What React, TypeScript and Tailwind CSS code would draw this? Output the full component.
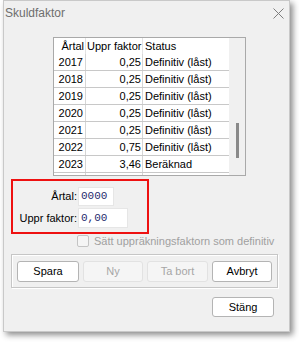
import React from 'react';

const ROWS = [
  { year: '2017', factor: '0,25', status: 'Definitiv (låst)' },
  { year: '2018', factor: '0,25', status: 'Definitiv (låst)' },
  { year: '2019', factor: '0,25', status: 'Definitiv (låst)' },
  { year: '2020', factor: '0,25', status: 'Definitiv (låst)' },
  { year: '2021', factor: '0,25', status: 'Definitiv (låst)' },
  { year: '2022', factor: '0,75', status: 'Definitiv (låst)' },
  { year: '2023', factor: '3,46', status: 'Beräknad' },
  { year: '', factor: '', status: '' },
];

const Btn: React.FC<{ label: string; w: string; disabled?: boolean }> = ({ label, w, disabled }) => (
  <div
    className={
      'h-[21px] flex items-center justify-center rounded-[3px] border ' +
      w +
      (disabled
        ? ' bg-[#f5f5f5] border-[#e2e2e2] text-[#a6a6a6]'
        : ' bg-white border-[#b4b4b4] text-black')
    }
  >
    {label}
  </div>
);

export default function App() {
  return (
    <div className="w-[299px] h-[342px] bg-white overflow-hidden font-['Liberation_Sans',Arial,sans-serif] text-[11px] leading-none text-black">
      <div className="ml-[3px] w-[287px] h-[332px] bg-[#f0f0f0] border border-[#c9c9c9] shadow-[3px_3px_6px_rgba(0,0,0,0.45)] flex flex-col">
        {/* title bar */}
        <div className="h-[24px] shrink-0 flex items-center justify-between pl-[1px] pr-[5px]">
          <span className="text-[12px] text-[#6e6e6e]">Skuldfaktor</span>
          <svg width="11" height="11" viewBox="0 0 11 11" className="mt-[1px]">
            <path d="M0.5 0.5 L10.5 10.5 M10.5 0.5 L0.5 10.5" stroke="#7d7d7d" strokeWidth="1" fill="none" />
          </svg>
        </div>

        {/* list */}
        <div className="ml-[49px] mt-[12px] w-[193px] h-[139px] shrink-0 border border-[#a9a9a9] bg-white flex overflow-hidden">
          <div className="w-[175px] flex flex-col">
            <div className="h-[16px] shrink-0 grid grid-cols-[32px_57px_86px] items-center">
              <div className="h-full flex items-center justify-end pr-[1px] border-r border-[#e3e3e3]">Årtal</div>
              <div className="h-full flex items-center pl-[1px] border-r border-[#e3e3e3]">Uppr faktor</div>
              <div className="h-full flex items-center pl-[2px]">Status</div>
            </div>
            {ROWS.map((r, i) => (
              <div key={i} className="h-[17px] shrink-0 grid grid-cols-[32px_57px_86px] border-b border-[#c8c8c8]">
                <div className="flex items-center justify-end pr-[2px] border-r border-[#d6d6d6]">{r.year}</div>
                <div className="flex items-center justify-end pr-[1px] border-r border-[#d6d6d6]">{r.factor}</div>
                <div className="flex items-center pl-[2px]">{r.status}</div>
              </div>
            ))}
          </div>
          <div className="w-[16px] bg-[#f0f0f0] flex justify-center">
            <div className="mt-[85px] w-[3px] h-[35px] bg-[#8a8a8a]" />
          </div>
        </div>

        {/* fields, highlighted */}
        <div className="ml-[7px] mt-[3px] w-[138px] h-[55px] shrink-0 border-2 border-[#ee1111] flex flex-col">
          <div className="mt-[6px] flex items-center">
            <span className="w-[64px] text-right">Årtal:</span>
            <div className="ml-[1px] w-[36px] h-[19px] bg-white border border-[#e6e6e6] flex items-center pl-[2px] font-['Liberation_Mono',monospace] text-[#1f2a6e]">
              0000
            </div>
          </div>
          <div className="mt-[2px] flex items-center">
            <span className="w-[64px] text-right">Uppr faktor:</span>
            <div className="ml-[1px] w-[50px] h-[20px] bg-white border border-[#e6e6e6] flex items-center pl-[2px] font-['Liberation_Mono',monospace] text-[#1f2a6e]">
              0,00
            </div>
          </div>
        </div>

        {/* checkbox */}
        <div className="ml-[73px] mt-[1px] flex items-center">
          <div className="w-[12px] h-[12px] rounded-[2px] border border-[#c4c4c4] bg-[#f5f5f5]" />
          <span className="ml-[5px] text-[#a0a0a0] whitespace-nowrap">Sätt uppräkningsfaktorn som definitiv</span>
        </div>

        {/* button group */}
        <div className="ml-[7px] mt-[7px] w-[267px] h-[34px] shrink-0 border border-[#c6c6c6] shadow-[inset_1px_1px_0_#ffffff,1px_1px_0_#ffffff] flex items-start pl-[5px] pt-[6px] gap-[4px]">
          <Btn label="Spara" w="w-[62px]" />
          <Btn label="Ny" w="w-[60px]" disabled />
          <Btn label="Ta bort" w="w-[61px]" disabled />
          <Btn label="Avbryt" w="w-[60px]" />
        </div>

        <div className="mt-[9px] flex justify-end pr-[15px]">
          <div className="w-[62px] h-[20px] flex items-center justify-center rounded-[3px] border border-[#b4b4b4] bg-white">
            Stäng
          </div>
        </div>
      </div>
    </div>
  );
}
